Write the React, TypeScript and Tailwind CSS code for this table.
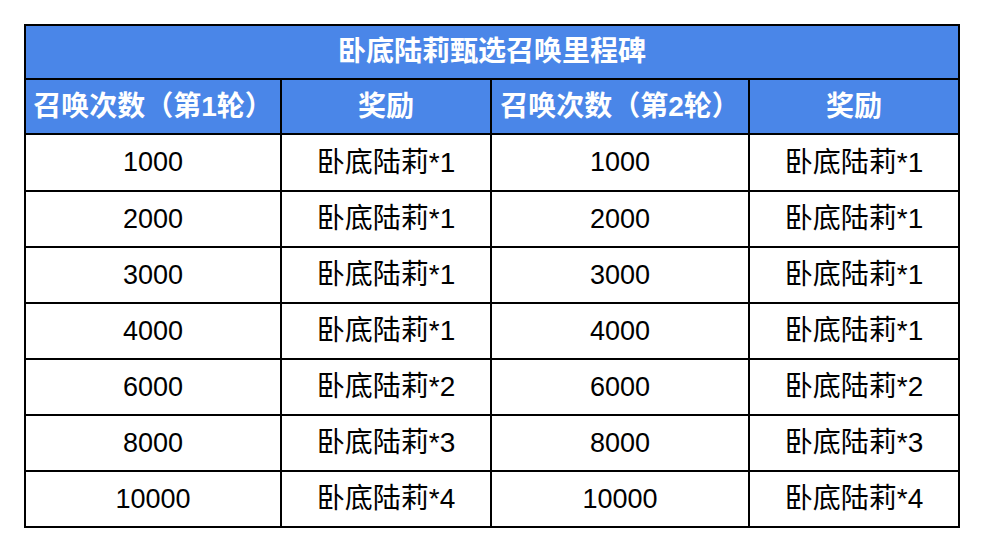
const rows: [string, string][] = [
  ['1000', '卧底陆莉*1'],
  ['2000', '卧底陆莉*1'],
  ['3000', '卧底陆莉*1'],
  ['4000', '卧底陆莉*1'],
  ['6000', '卧底陆莉*2'],
  ['8000', '卧底陆莉*3'],
  ['10000', '卧底陆莉*4'],
];

const font = { fontFamily: '"Liberation Sans", "Noto Sans CJK SC", sans-serif' };

function Head({ children }: { children: React.ReactNode }) {
  return (
    <div className="flex items-center justify-center bg-[#4a86e8] text-[28px] font-bold text-white">
      {children}
    </div>
  );
}

function Cell({ children, size = 'text-[28px]' }: { children: React.ReactNode; size?: string }) {
  return (
    <div className={`flex items-center justify-center bg-white text-black ${size}`}>{children}</div>
  );
}

export default function App() {
  return (
    <div className="min-h-screen bg-white pl-[24px] pt-[24px]" style={font}>
      <div className="grid w-fit grid-cols-[254px_208px_256px_208px] grid-rows-[52px_53px_55px_repeat(6,54px)] gap-[2px] bg-black p-[2px] leading-none">
        <div className="col-span-4 flex items-center justify-center bg-[#4a86e8] text-[28px] font-bold text-white">
          卧底陆莉甄选召唤里程碑
        </div>
        <Head>召唤次数（第1轮）</Head>
        <Head>奖励</Head>
        <Head>召唤次数（第2轮）</Head>
        <Head>奖励</Head>
        {rows.map(([n, r], i) => (
          <div key={i} className="contents">
            <Cell size="text-[27px]">{n}</Cell>
            <Cell>{r}</Cell>
            <Cell size="text-[27px]">{n}</Cell>
            <Cell>{r}</Cell>
          </div>
        ))}
      </div>
    </div>
  );
}
